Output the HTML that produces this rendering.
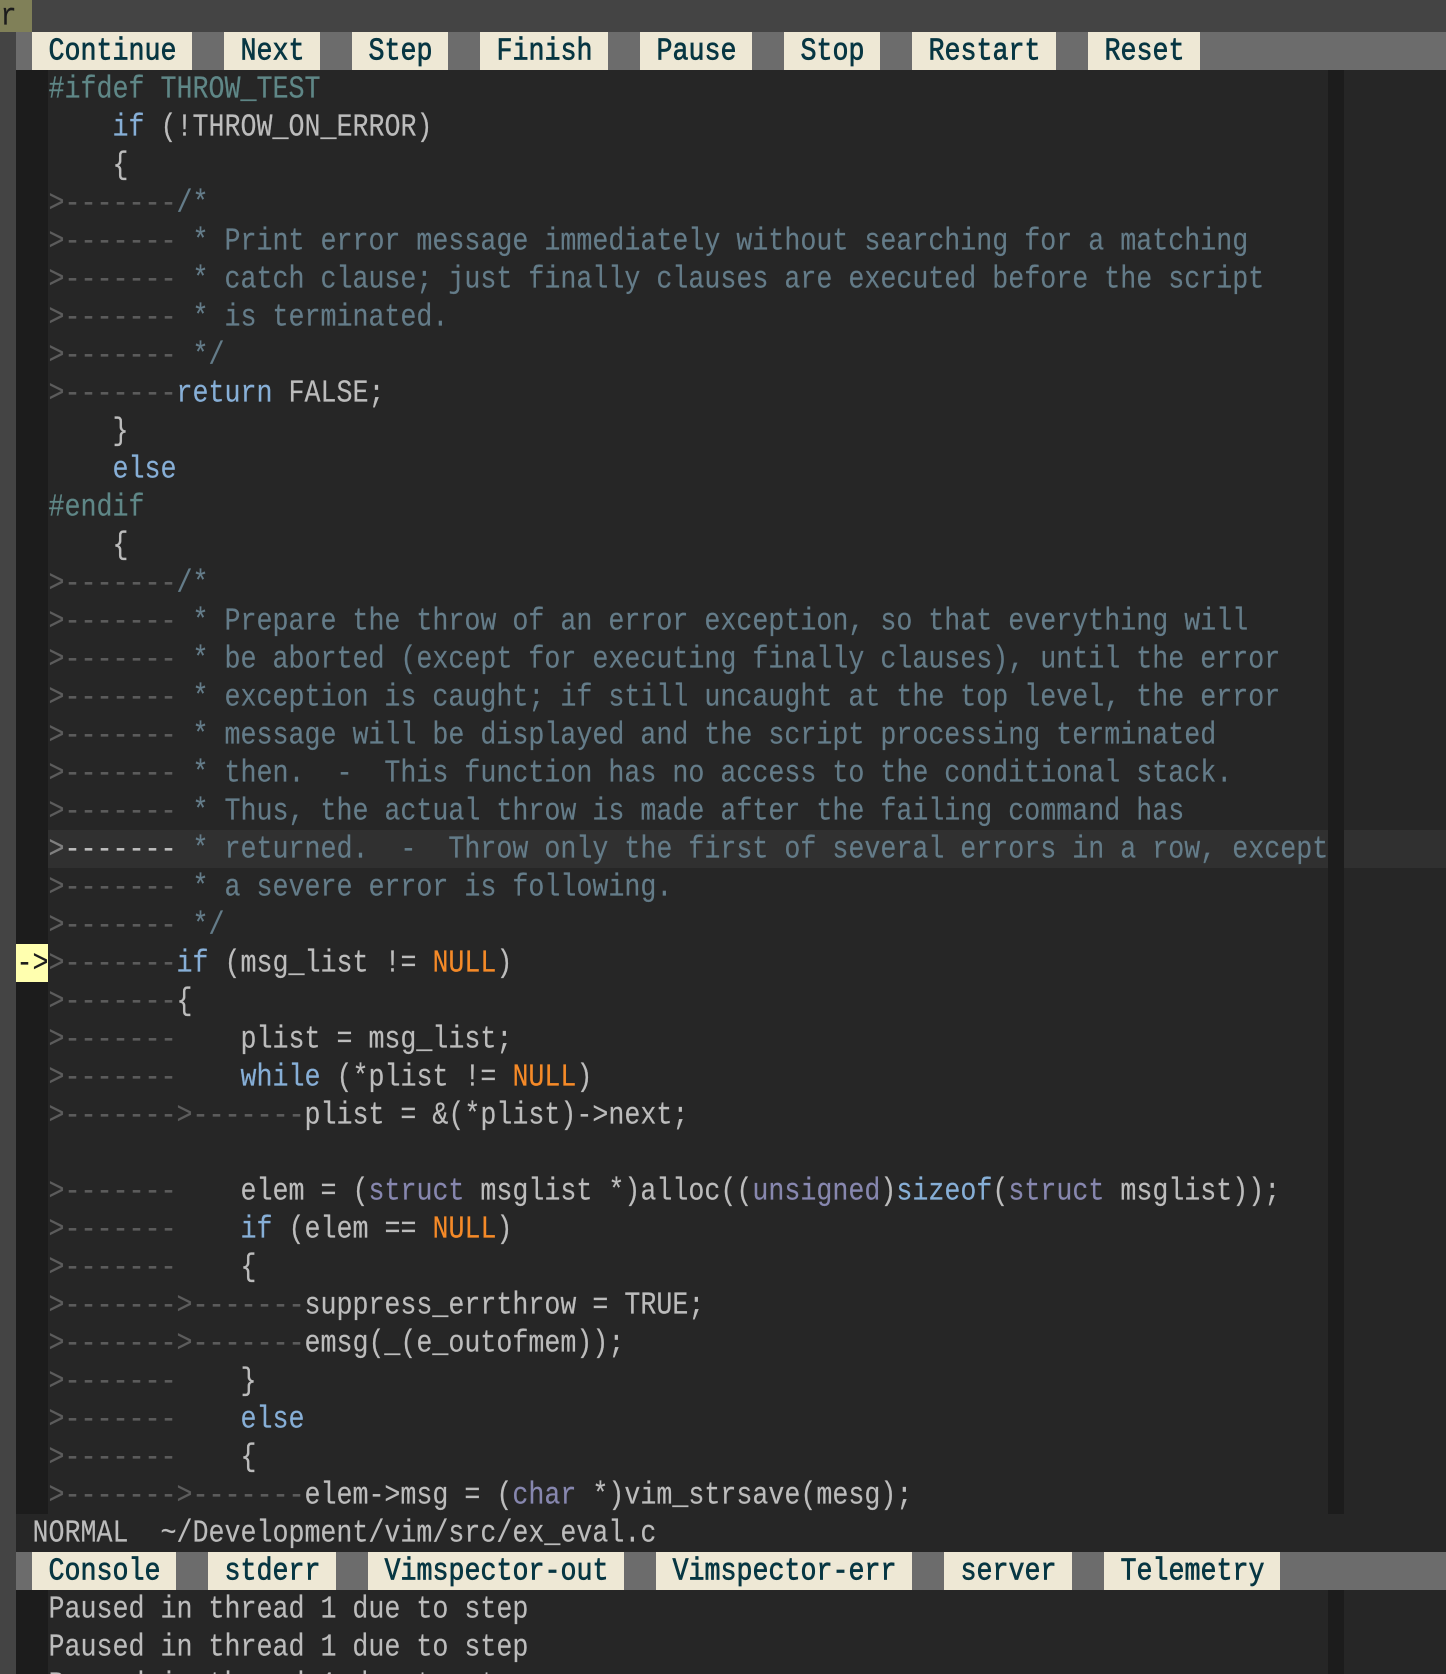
<!DOCTYPE html>
<html><head><meta charset="utf-8"><style>
html,body{margin:0;padding:0;background:#262626}
#p{position:relative;width:1446px;height:1674px;overflow:hidden;background:#262626;font-family:"Liberation Mono",monospace;font-size:26.66px;color:#bcbcbc}
.b{position:absolute}
.l{position:absolute;left:48px;height:38px;line-height:38px;white-space:pre;transform:translate(.5px,2px) scaleY(1.17);transform-origin:0 55%;-webkit-text-stroke:.15px}
.tb{position:absolute;height:38px;line-height:38px;background:#eee8d5;color:#073642;white-space:pre;-webkit-text-stroke:.6px #073642}
.tb span{display:block;transform:translate(.5px,2px) scaleY(1.17);transform-origin:0 55%}
.c{color:#647c89}.k{color:#87afd7}.t{color:#8787af}.n{color:#f58a28}.p{color:#5f8787}.i{color:#5c5c5c}
.cl .i2{color:#bcbcbc}.ar{color:#808080}
</style></head><body><div id="p">
<div class="b" style="left:0;top:0;width:1446px;height:32px;background:#444"></div>
<div class="b" style="left:0;top:0;width:32px;height:32px;background:#808058"></div>
<div class="l" style="left:0;top:-3px;color:#1c1c1c">r</div>
<div class="b" style="left:0;top:32px;width:16px;height:1642px;background:#444"></div>
<div class="b" style="left:16px;top:32px;width:1430px;height:38px;background:#6c6c6c"></div>
<div class="tb" style="left:32px;top:32px;width:160px"><span> Continue </span></div>
<div class="tb" style="left:224px;top:32px;width:96px"><span> Next </span></div>
<div class="tb" style="left:352px;top:32px;width:96px"><span> Step </span></div>
<div class="tb" style="left:480px;top:32px;width:128px"><span> Finish </span></div>
<div class="tb" style="left:640px;top:32px;width:112px"><span> Pause </span></div>
<div class="tb" style="left:784px;top:32px;width:96px"><span> Stop </span></div>
<div class="tb" style="left:912px;top:32px;width:144px"><span> Restart </span></div>
<div class="tb" style="left:1088px;top:32px;width:112px"><span> Reset </span></div>
<div class="b" style="left:16px;top:70px;width:32px;height:1444px;background:#1c1c1c"></div>
<div class="b" style="left:48px;top:830px;width:1398px;height:38px;background:#303030"></div>
<div class="b" style="left:1328px;top:70px;width:16px;height:1444px;background:#1c1c1c"></div>
<div class="b" style="left:16px;top:944px;width:32px;height:38px;background:#ffffaf"></div>
<div class="l" style="left:16px;top:944px;color:#1c1c1c">-&gt;</div>
<div class="l" style="top:70px"><span class="p">#ifdef THROW_TEST</span></div>
<div class="l" style="top:108px">    <span class="k">if</span> (!THROW_ON_ERROR)</div>
<div class="l" style="top:146px">    {</div>
<div class="l" style="top:184px"><span class="i">&gt;-------</span><span class="c">/*</span></div>
<div class="l" style="top:222px"><span class="i">&gt;-------</span><span class="c"> * Print error message immediately without searching for a matching</span></div>
<div class="l" style="top:260px"><span class="i">&gt;-------</span><span class="c"> * catch clause; just finally clauses are executed before the script</span></div>
<div class="l" style="top:298px"><span class="i">&gt;-------</span><span class="c"> * is terminated.</span></div>
<div class="l" style="top:336px"><span class="i">&gt;-------</span><span class="c"> */</span></div>
<div class="l" style="top:374px"><span class="i">&gt;-------</span><span class="k">return</span> FALSE;</div>
<div class="l" style="top:412px">    }</div>
<div class="l" style="top:450px">    <span class="k">else</span></div>
<div class="l" style="top:488px"><span class="p">#endif</span></div>
<div class="l" style="top:526px">    {</div>
<div class="l" style="top:564px"><span class="i">&gt;-------</span><span class="c">/*</span></div>
<div class="l" style="top:602px"><span class="i">&gt;-------</span><span class="c"> * Prepare the throw of an error exception, so that everything will</span></div>
<div class="l" style="top:640px"><span class="i">&gt;-------</span><span class="c"> * be aborted (except for executing finally clauses), until the error</span></div>
<div class="l" style="top:678px"><span class="i">&gt;-------</span><span class="c"> * exception is caught; if still uncaught at the top level, the error</span></div>
<div class="l" style="top:716px"><span class="i">&gt;-------</span><span class="c"> * message will be displayed and the script processing terminated</span></div>
<div class="l" style="top:754px"><span class="i">&gt;-------</span><span class="c"> * then.  -  This function has no access to the conditional stack.</span></div>
<div class="l" style="top:792px"><span class="i">&gt;-------</span><span class="c"> * Thus, the actual throw is made after the failing command has</span></div>
<div class="l cl" style="top:830px"><span class="ar">&gt;</span><span class="i2">-------</span><span class="c"> * returned.  -  Throw only the first of several errors in a row, except</span></div>
<div class="l" style="top:868px"><span class="i">&gt;-------</span><span class="c"> * a severe error is following.</span></div>
<div class="l" style="top:906px"><span class="i">&gt;-------</span><span class="c"> */</span></div>
<div class="l" style="top:944px"><span class="i">&gt;-------</span><span class="k">if</span> (msg_list != <span class="n">NULL</span>)</div>
<div class="l" style="top:982px"><span class="i">&gt;-------</span>{</div>
<div class="l" style="top:1020px"><span class="i">&gt;-------</span>    plist = msg_list;</div>
<div class="l" style="top:1058px"><span class="i">&gt;-------</span>    <span class="k">while</span> (*plist != <span class="n">NULL</span>)</div>
<div class="l" style="top:1096px"><span class="i">&gt;-------&gt;-------</span>plist = &amp;(*plist)-&gt;next;</div>
<div class="l" style="top:1172px"><span class="i">&gt;-------</span>    elem = (<span class="t">struct</span> msglist *)alloc((<span class="t">unsigned</span>)<span class="k">sizeof</span>(<span class="t">struct</span> msglist));</div>
<div class="l" style="top:1210px"><span class="i">&gt;-------</span>    <span class="k">if</span> (elem == <span class="n">NULL</span>)</div>
<div class="l" style="top:1248px"><span class="i">&gt;-------</span>    {</div>
<div class="l" style="top:1286px"><span class="i">&gt;-------&gt;-------</span>suppress_errthrow = TRUE;</div>
<div class="l" style="top:1324px"><span class="i">&gt;-------&gt;-------</span>emsg(_(e_outofmem));</div>
<div class="l" style="top:1362px"><span class="i">&gt;-------</span>    }</div>
<div class="l" style="top:1400px"><span class="i">&gt;-------</span>    <span class="k">else</span></div>
<div class="l" style="top:1438px"><span class="i">&gt;-------</span>    {</div>
<div class="l" style="top:1476px"><span class="i">&gt;-------&gt;-------</span>elem-&gt;msg = (<span class="t">char</span> *)vim_strsave(mesg);</div>
<div class="l" style="left:32px;top:1514px">NORMAL  ~/Development/vim/src/ex_eval.c</div>
<div class="b" style="left:16px;top:1552px;width:1430px;height:38px;background:#6c6c6c"></div>
<div class="tb" style="left:32px;top:1552px;width:144px"><span> Console </span></div>
<div class="tb" style="left:208px;top:1552px;width:128px"><span> stderr </span></div>
<div class="tb" style="left:368px;top:1552px;width:256px"><span> Vimspector-out </span></div>
<div class="tb" style="left:656px;top:1552px;width:256px"><span> Vimspector-err </span></div>
<div class="tb" style="left:944px;top:1552px;width:128px"><span> server </span></div>
<div class="tb" style="left:1104px;top:1552px;width:176px"><span> Telemetry </span></div>
<div class="b" style="left:16px;top:1590px;width:32px;height:84px;background:#1c1c1c"></div>
<div class="b" style="left:1328px;top:1590px;width:16px;height:84px;background:#1c1c1c"></div>
<div class="l" style="top:1590px">Paused in thread 1 due to step</div>
<div class="l" style="top:1628px">Paused in thread 1 due to step</div>
<div class="l" style="top:1666px">Paused in thread 1 due to step</div>
</div></body></html>
